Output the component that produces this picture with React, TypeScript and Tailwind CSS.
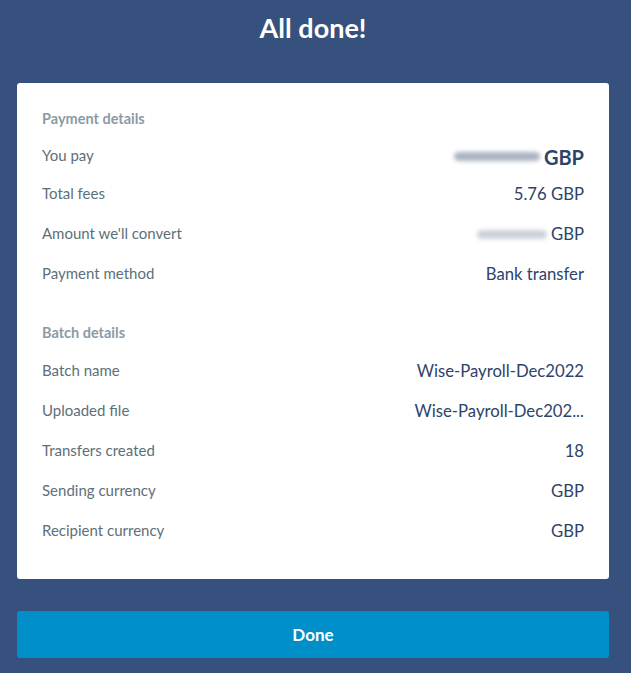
import React from "react";

const font = { fontFamily: "Lato, 'Open Sans', 'Noto Sans', sans-serif" };

function Row({ label, children }: { label: string; children: React.ReactNode }) {
  return (
    <div className="flex h-10 items-center justify-between">
      <span className="text-[15px] text-[#5d7079]">{label}</span>
      <span className="flex items-center pt-[3px] text-[16.7px] text-[#2e4369]">{children}</span>
    </div>
  );
}

function Blur({ w, dark }: { w: number; dark?: boolean }) {
  return (
    <span
      className={`mr-[4px] inline-block h-[9px] rounded-full blur-[2px] ${dark ? "bg-[#aab3c2]" : "bg-[#ccd1d8]"}`}
      style={{ width: w }}
    />
  );
}

export default function App() {
  return (
    <div className="min-h-[673px] w-full bg-[#37517e] pl-[17px] pr-[22px]" style={font}>
      <h1 className="pt-[12px] text-center text-[27px] font-bold leading-[32px] text-white">All done!</h1>
      <div className="mt-[39px] rounded-[3px] bg-white px-[25px] pt-[26px] pb-[29px]">
        <div className="text-[14.5px] font-bold leading-[20px] text-[#8a9ba6]">Payment details</div>
        <div className="mt-[8px]">
          <div className="flex h-[36px] items-center justify-between">
            <span className="text-[15px] text-[#5d7079]">You pay</span>
            <span className="flex items-center pt-[3px] text-[20px] font-bold text-[#2e4369]">
              <Blur w={86} dark />
              GBP
            </span>
          </div>
          <Row label="Total fees">5.76 GBP</Row>
          <Row label="Amount we'll convert">
            <Blur w={70} />
            GBP
          </Row>
          <Row label="Payment method">Bank transfer</Row>
        </div>
        <div className="mt-[30px] text-[14.5px] font-bold leading-[20px] text-[#8a9ba6]">Batch details</div>
        <div className="mt-[7px]">
          <Row label="Batch name">Wise-Payroll-Dec2022</Row>
          <Row label="Uploaded file">Wise-Payroll-Dec202...</Row>
          <Row label="Transfers created">18</Row>
          <Row label="Sending currency">GBP</Row>
          <Row label="Recipient currency">GBP</Row>
        </div>
      </div>
      <button className="mt-[32px] h-[47px] w-full rounded-[3px] bg-[#008fc9] text-[17px] font-bold text-white">
        Done
      </button>
    </div>
  );
}
